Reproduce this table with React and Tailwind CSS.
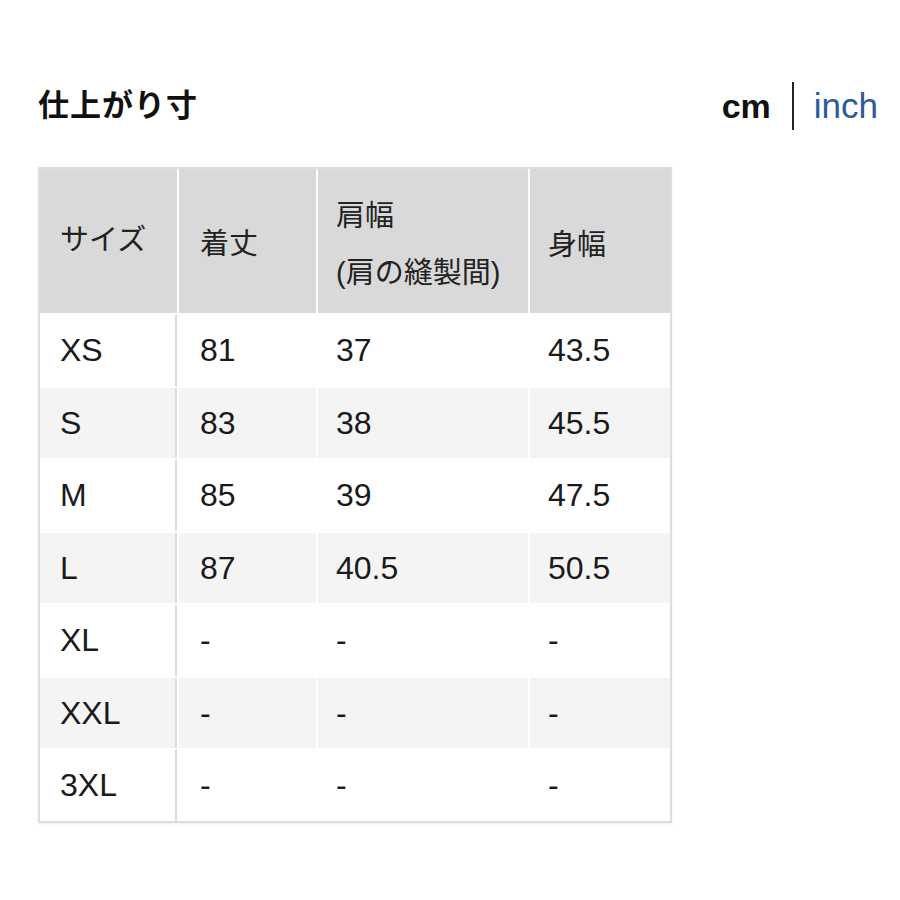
import React from "react";

const rows = [
  { size: "XS", length: "81", shoulder: "37", width: "43.5" },
  { size: "S", length: "83", shoulder: "38", width: "45.5" },
  { size: "M", length: "85", shoulder: "39", width: "47.5" },
  { size: "L", length: "87", shoulder: "40.5", width: "50.5" },
  { size: "XL", length: "-", shoulder: "-", width: "-" },
  { size: "XXL", length: "-", shoulder: "-", width: "-" },
  { size: "3XL", length: "-", shoulder: "-", width: "-" },
];

const App = () => {
  return (
    <div
      className="w-[900px] h-[900px] bg-white text-[#1a1a1a] pt-[84px] pl-[38px]"
      style={{ fontFamily: '"Liberation Sans", "Noto Sans CJK JP", sans-serif' }}
    >
      {/* Title + unit switch */}
      <div className="flex items-center justify-between w-[840px] h-[44px]">
        <h1 className="text-[31px] font-bold tracking-[1px] text-[#111]">仕上がり寸</h1>
        <div className="flex items-center">
          <span className="text-[34px] font-bold text-[#111]">cm</span>
          <span className="ml-[21px] mr-[20px] w-[2px] h-[48px] bg-[#222]" />
          <span className="text-[35px] text-[#2b5c99]">inch</span>
        </div>
      </div>

      {/* Size table */}
      <div className="mt-[39px] w-[634px] border-2 border-[#dedede] bg-white shadow-[0_1px_2px_rgba(0,0,0,0.08)]">
        <div className="grid grid-cols-[137px_137px_210px_140px] gap-x-[2px] h-[144px] text-[29px] text-[#222]">
          <div className="bg-[#d9d9d9] flex items-center pl-[20px]">サイズ</div>
          <div className="bg-[#d9d9d9] flex items-center pl-[21px] pt-[8px]">着丈</div>
          <div className="bg-[#d9d9d9] flex flex-col justify-center pl-[18px] pt-[8px] leading-[57px]">
            <span>肩幅</span>
            <span>(肩の縫製間)</span>
          </div>
          <div className="bg-[#d9d9d9] flex items-center pl-[18px] pt-[10px]">身幅</div>
        </div>
        {rows.map((row, i) => (
          <div
            key={row.size}
            className="grid grid-cols-[137px_137px_210px_140px] gap-x-[2px] h-[72.5px] text-[32px] pt-[2px]"
          >
            <div
              className={`flex items-center pl-[20px] border-r-2 border-[#dcdcdc] ${
                i % 2 === 1 ? "bg-[#f4f4f4]" : "bg-white"
              }`}
            >
              {row.size}
            </div>
            {[row.length, row.shoulder, row.width].map((v, j) => (
              <div
                key={j}
                className={`flex items-center ${j === 0 ? "pl-[21px]" : "pl-[18px]"} ${
                  i % 2 === 1 ? "bg-[#f4f4f4]" : "bg-white"
                }`}
              >
                {v}
              </div>
            ))}
          </div>
        ))}
      </div>
    </div>
  );
};

export default App;
